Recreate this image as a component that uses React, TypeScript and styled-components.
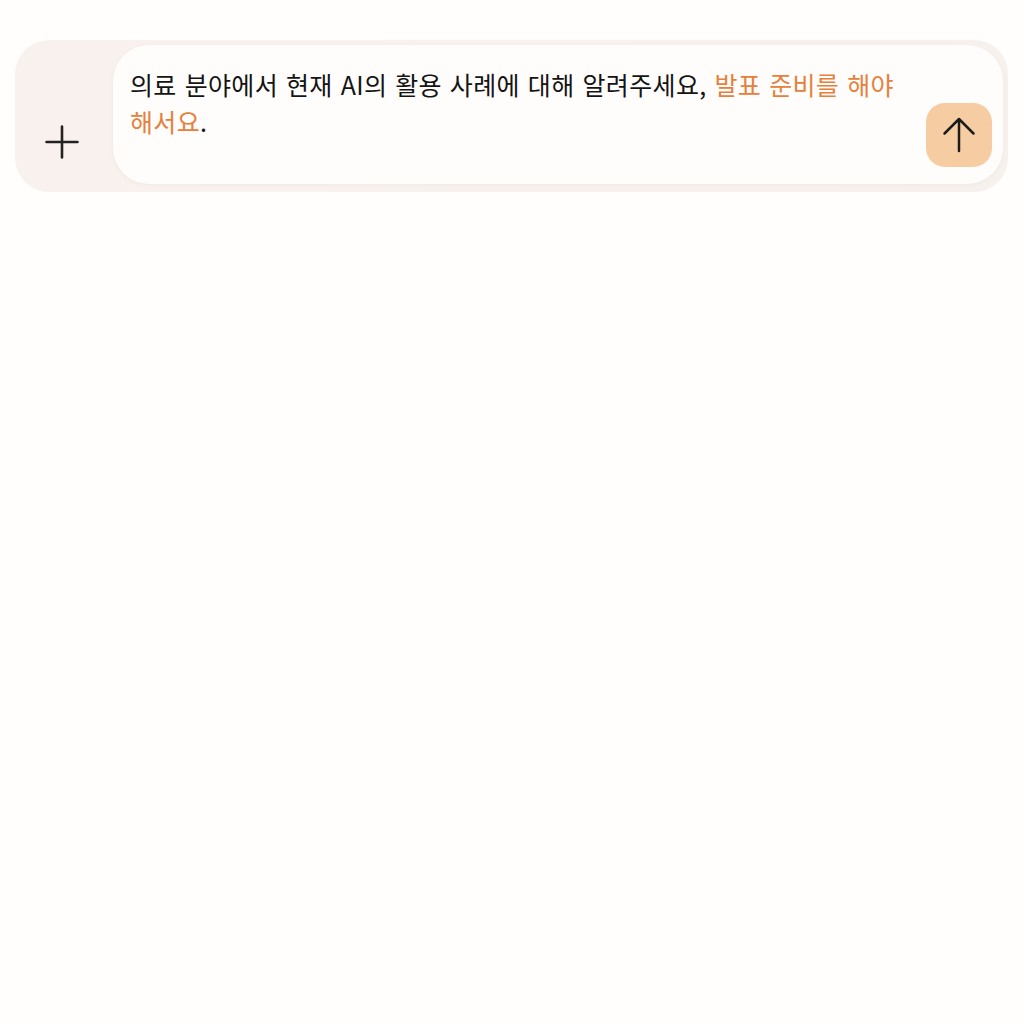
import React from 'react'
import styled, { createGlobalStyle } from 'styled-components'

const GlobalStyle = createGlobalStyle`
  html, body {
    margin: 0;
    padding: 0;
    background: #fffefd;
    font-family: 'Noto Sans CJK KR', 'Noto Sans', sans-serif;
  }
`

const Page = styled.div`
  width: 1024px;
  height: 1024px;
  box-sizing: border-box;
  padding: 40px 16px 0 15px;
`

const Composer = styled.div`
  display: flex;
  align-items: stretch;
  min-height: 152px;
  box-sizing: border-box;
  padding: 5px 5px 8px 0;
  border-radius: 34px;
  background: linear-gradient(90deg, #f9f1ed 0%, #f8f2ee 50%, #f7f1ed 100%);
`

const AttachArea = styled.div`
  width: 98px;
  display: flex;
  align-items: flex-end;
  justify-content: center;
  padding: 0 5px 25px 0;
  box-sizing: border-box;
`

const IconButton = styled.button`
  border: none;
  background: transparent;
  padding: 0;
  width: 34px;
  height: 34px;
  display: flex;
  align-items: center;
  justify-content: center;
  color: #222;
`

const InputBox = styled.div`
  flex: 1;
  display: flex;
  align-items: flex-end;
  gap: 16px;
  padding: 21px 11px 17px 17px;
  border-radius: 36px;
  background: #fffdfb;
  box-shadow: 0 1px 4px rgba(160, 120, 100, 0.08);
`

const Prompt = styled.p`
  align-self: flex-start;
  flex: 1;
  margin: 0;
  font-size: 25px;
  line-height: 37px;
  color: #141414;
  letter-spacing: 0.35px;
  word-spacing: 2px;
`

const Highlight = styled.span`
  color: #e6803c;
`

const SendButton = styled.button`
  width: 66px;
  height: 64px;
  flex-shrink: 0;
  border: none;
  border-radius: 19px;
  background: #f6cda3;
  display: flex;
  align-items: center;
  justify-content: center;
  color: #1c1c1c;
  padding: 0;
`

export default function App() {
  return (
    <>
      <GlobalStyle />
      <Page>
        <Composer>
          <AttachArea>
            <IconButton aria-label="Attach">
              <svg width="34" height="34" viewBox="0 0 34 34" fill="none">
                <path d="M17 1.5v31M1.5 17h31" stroke="currentColor" strokeWidth="2.6" strokeLinecap="round" />
              </svg>
            </IconButton>
          </AttachArea>
          <InputBox>
            <Prompt>
              의료 분야에서 현재 AI의 활용 사례에 대해 알려주세요,{' '}
              <Highlight>발표 준비를 해야 해서요</Highlight>.
            </Prompt>
            <SendButton aria-label="Send">
              <svg width="34" height="38" viewBox="0 0 34 38" fill="none">
                <path d="M17 35V3M2.5 17.5L17 3l14.5 14.5" stroke="currentColor" strokeWidth="2.5" strokeLinecap="round" strokeLinejoin="round" />
              </svg>
            </SendButton>
          </InputBox>
        </Composer>
      </Page>
    </>
  )
}
